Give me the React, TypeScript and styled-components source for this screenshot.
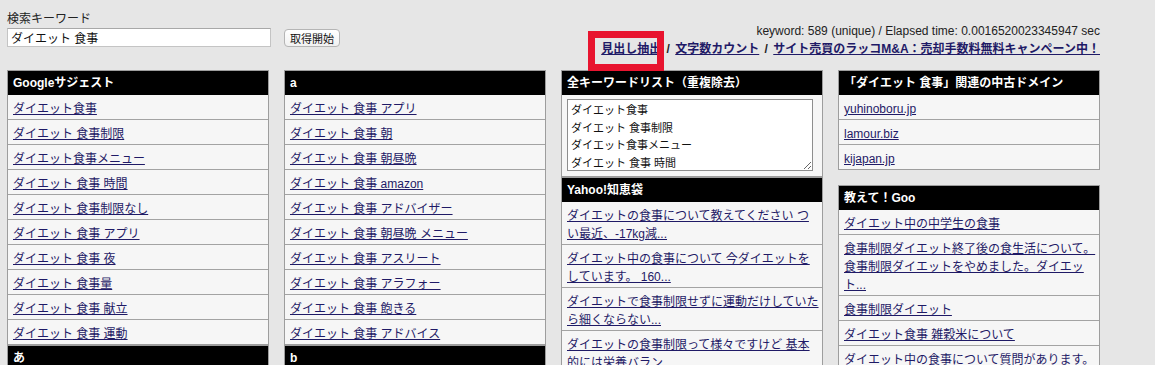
import React from "react";
import styled, { createGlobalStyle } from "styled-components";

const GlobalStyle = createGlobalStyle`
  body {
    margin: 0;
    background: #e6e6e6;
    font-family: "Liberation Sans", "Noto Sans CJK JP", sans-serif;
    font-size: 12px;
    color: #222;
  }
`;

const Page = styled.div`
  width: 1093px;
  margin-left: 7px;
`;

const TopBar = styled.div`
  height: 70px;
  display: flex;
  justify-content: space-between;
`;

const SearchForm = styled.div`
  padding-top: 11px;
`;

const Label = styled.div`
  line-height: 16px;
  font-size: 12px;
`;

const FormRow = styled.div`
  margin-top: 1px;
  display: flex;
  align-items: center;
  gap: 13px;
`;

const KeywordInput = styled.input`
  box-sizing: border-box;
  width: 264px;
  height: 19px;
  border: 1px solid #c4c4c4;
  border-top-color: #a8a8a8;
  background: #fff;
  padding: 0 3px;
  font: 12px "Liberation Sans", "Noto Sans CJK JP", sans-serif;
  color: #111;
  outline: none;
`;

const FetchButton = styled.button`
  box-sizing: border-box;
  width: 56px;
  height: 18px;
  margin-top: 1px;
  border: 1px solid #b5b5b5;
  border-radius: 4px;
  background: linear-gradient(#ffffff, #f1f1f1);
  font: 11px "Liberation Sans", "Noto Sans CJK JP", sans-serif;
  color: #111;
  padding: 0;
`;

const Stats = styled.div`
  padding-top: 23px;
  text-align: right;
`;

const StatLine = styled.div`
  line-height: 17px;
  color: #222;
`;

const NavLinks = styled.div`
  line-height: 18px;
  font-weight: bold;
  color: #222;
  word-spacing: 2px;
`;

const Link = styled.a`
  color: #1f1a66;
  text-decoration: underline;
  word-spacing: 0;
`;

const Marked = styled.span`
  position: relative;
`;

const Highlight = styled.span`
  position: absolute;
  left: -13px;
  top: -11px;
  width: 76px;
  height: 40px;
  box-sizing: border-box;
  border: 7px solid #e8142f;
  pointer-events: none;
`;

const Columns = styled.div`
  display: flex;
  gap: 15px;
  align-items: flex-start;
`;

const Column = styled.div`
  width: 262px;
  flex: none;
`;

const Panel = styled.div<{ $spaced?: boolean }>`
  border: 1px solid #9d9d9d;
  background: #f6f6f6;
  margin-bottom: ${(p) => (p.$spaced ? "15px" : "0")};
`;

const PanelHeader = styled.div`
  background: #000;
  color: #fff;
  font-weight: bold;
  font-size: 12px;
  line-height: 24px;
  padding: 0 5px;
  white-space: nowrap;
`;

const Row = styled.div`
  padding: 5px 2px 1px 5px;
  line-height: 18px;
  border-bottom: 1px solid #a3a3a3;
  &:last-child {
    border-bottom: none;
  }
`;

const ListBody = styled.div`
  padding: 4px 5px 5px 5px;
`;

const KeywordList = styled.textarea`
  display: block;
  box-sizing: border-box;
  width: 246px;
  height: 72px;
  border: 1px solid #8e8e8e;
  background: #fff;
  padding: 2px 3px;
  font: 11px/17.5px "Liberation Sans", "Noto Sans CJK JP", sans-serif;
  color: #111;
  overflow: hidden;
  resize: vertical;
  outline: none;
`;

const suggest = [
  "ダイエット食事",
  "ダイエット 食事制限",
  "ダイエット食事メニュー",
  "ダイエット 食事 時間",
  "ダイエット 食事制限なし",
  "ダイエット 食事 アプリ",
  "ダイエット 食事 夜",
  "ダイエット 食事量",
  "ダイエット 食事 献立",
  "ダイエット 食事 運動",
];

const alphaA = [
  "ダイエット 食事 アプリ",
  "ダイエット 食事 朝",
  "ダイエット 食事 朝昼晩",
  "ダイエット 食事 amazon",
  "ダイエット 食事 アドバイザー",
  "ダイエット 食事 朝昼晩 メニュー",
  "ダイエット 食事 アスリート",
  "ダイエット 食事 アラフォー",
  "ダイエット 食事 飽きる",
  "ダイエット 食事 アドバイス",
];

const chiebukuro = [
  "ダイエットの食事について教えてください つい最近、-17kg減...",
  "ダイエット中の食事について 今ダイエットをしています。 160...",
  "ダイエットで食事制限せずに運動だけしていたら細くならない...",
  "ダイエットの食事制限って様々ですけど 基本的には栄養バラン...",
];

const domains = ["yuhinoboru.jp", "lamour.biz", "kijapan.jp"];

const goo = [
  "ダイエット中の中学生の食事",
  "食事制限ダイエット終了後の食生活について。食事制限ダイエットをやめました。ダイエット...",
  "食事制限ダイエット",
  "ダイエット食事 雑穀米について",
  "ダイエット中の食事について質問があります。\u200B...",
];

const allKeywords = [...suggest, ...alphaA].join("\n");

const LinkPanel = ({ title, items, spaced }: { title: string; items: string[]; spaced?: boolean }) => (
  <Panel $spaced={spaced}>
    <PanelHeader>{title}</PanelHeader>
    {items.map((t, i) => (
      <Row key={i}>
        <Link href="#">{t}</Link>
      </Row>
    ))}
  </Panel>
);

export default function App() {
  return (
    <>
      <GlobalStyle />
      <Page>
        <TopBar>
          <SearchForm>
            <Label>検索キーワード</Label>
            <FormRow>
              <KeywordInput defaultValue="ダイエット 食事" />
              <FetchButton>取得開始</FetchButton>
            </FormRow>
          </SearchForm>
          <Stats>
            <StatLine>keyword: 589 (unique) / Elapsed time: 0.0016520023345947 sec</StatLine>
            <NavLinks>
              <Marked>
                <Link href="#">見出し抽出</Link>
                <Highlight />
              </Marked>{" "}
              / <Link href="#">文字数カウント</Link> /{" "}
              <Link href="#">サイト売買のラッコM&amp;A：売却手数料無料キャンペーン中！</Link>
            </NavLinks>
          </Stats>
        </TopBar>
        <Columns>
          <Column>
            <LinkPanel title="Googleサジェスト" items={suggest} />
            <LinkPanel title="あ" items={["ダイエット 食事 あすけん"]} />
          </Column>
          <Column>
            <LinkPanel title="a" items={alphaA} />
            <LinkPanel title="b" items={["ダイエット 食事 バランス"]} />
          </Column>
          <Column>
            <Panel>
              <PanelHeader>全キーワードリスト（重複除去）</PanelHeader>
              <ListBody>
                <KeywordList readOnly value={allKeywords} />
              </ListBody>
            </Panel>
            <LinkPanel title="Yahoo!知恵袋" items={chiebukuro} />
          </Column>
          <Column>
            <LinkPanel title="「ダイエット 食事」関連の中古ドメイン" items={domains} spaced />
            <LinkPanel title="教えて！Goo" items={goo} />
          </Column>
        </Columns>
      </Page>
    </>
  );
}
